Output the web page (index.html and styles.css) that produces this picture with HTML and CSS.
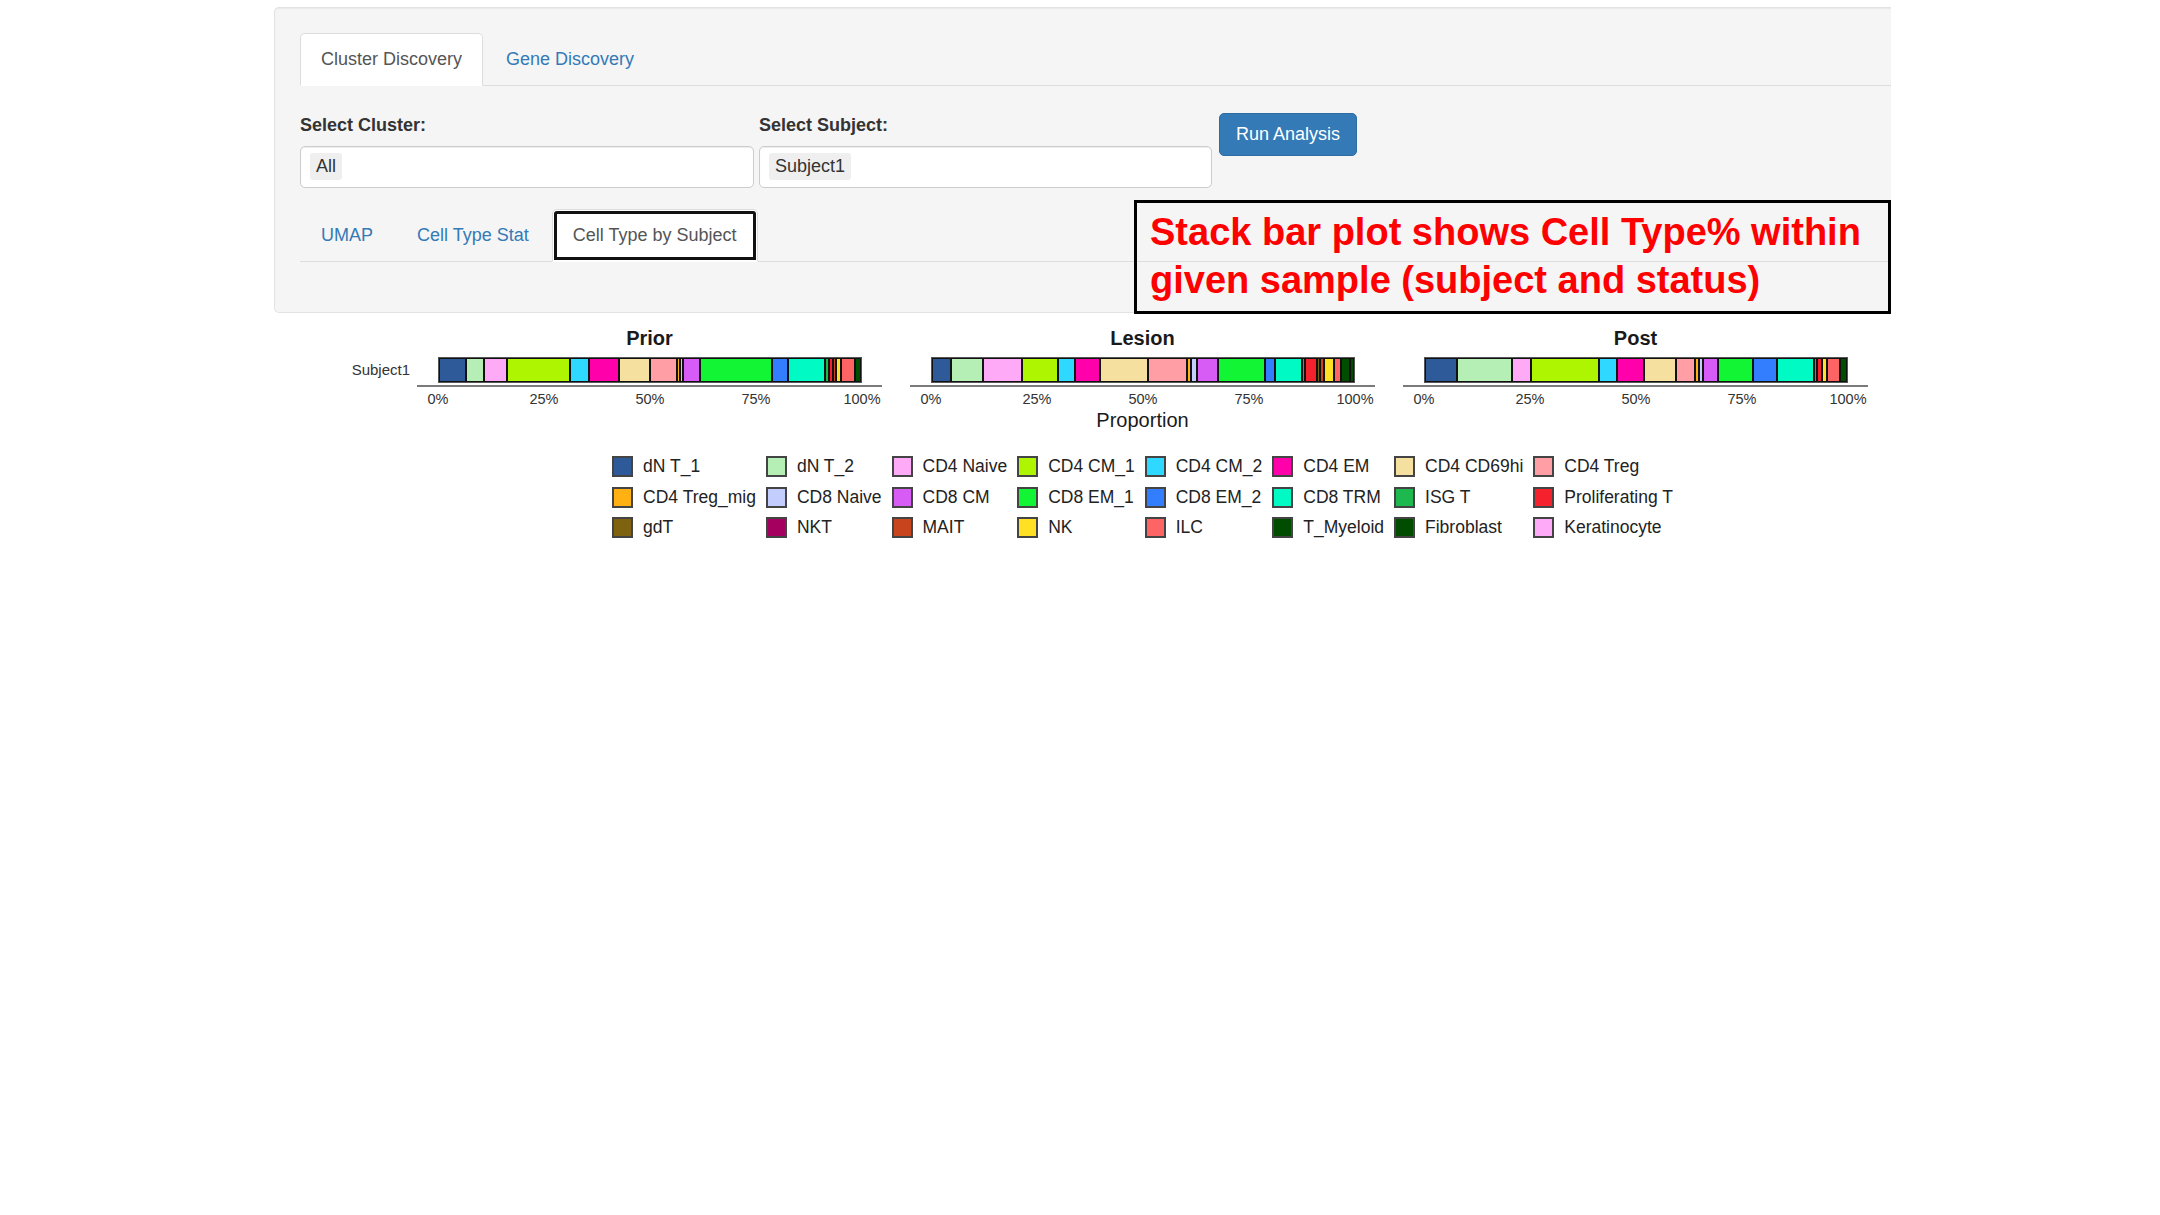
FILE: index.html
```html
<!DOCTYPE html>
<html>
<head>
<meta charset="utf-8">
<title>Cell Type by Subject</title>
<link rel="stylesheet" href="styles.css">
</head>
<body>
<div class="page">
  <div class="well">
    <ul class="nav-tabs">
      <li class="tab active"><a>Cluster Discovery</a></li>
      <li class="tab"><a>Gene Discovery</a></li>
    </ul>
    <div class="form-row">
      <div class="field field-cluster">
        <label class="field-label">Select Cluster:</label>
        <div class="select-box"><span class="chip">All</span></div>
      </div>
      <div class="field field-subject">
        <label class="field-label">Select Subject:</label>
        <div class="select-box"><span class="chip">Subject1</span></div>
      </div>
      <button class="btn-run">Run Analysis</button>
    </div>
    <ul class="nav-tabs nav-sub">
      <li class="tab"><a>UMAP</a></li>
      <li class="tab"><a>Cell Type Stat</a></li>
      <li class="tab active"><a class="focused">Cell Type by Subject</a></li>
    </ul>
    <div class="tab-content"></div>
  </div>

  <div class="annotation">Stack bar plot shows Cell Type% within<br>given sample (subject and status)</div>

  <div class="plot">
    <div class="plot-row">
      <div class="ylab"><span>Subject1</span></div>
      <div class="facets">
        <div class="facet">
          <div class="facet-title">Prior</div>
          <div class="bar">
            <span class="seg c1" style="flex:6.46"></span>
            <span class="seg c2" style="flex:4.1"></span>
            <span class="seg c3" style="flex:5.4"></span>
            <span class="seg c4" style="flex:15.9"></span>
            <span class="seg c5" style="flex:4.45"></span>
            <span class="seg c6" style="flex:7.25"></span>
            <span class="seg c7" style="flex:7.6"></span>
            <span class="seg c8" style="flex:6.3"></span>
            <span class="seg c9" style="flex:0.3"></span>
            <span class="seg c10" style="flex:0.3"></span>
            <span class="seg c11" style="flex:3.9"></span>
            <span class="seg c12" style="flex:18.1"></span>
            <span class="seg c13" style="flex:3.75"></span>
            <span class="seg c14" style="flex:8.9"></span>
            <span class="seg c15" style="flex:0.5"></span>
            <span class="seg c16" style="flex:0.5"></span>
            <span class="seg c19" style="flex:0.4"></span>
            <span class="seg c20" style="flex:0.7"></span>
            <span class="seg c21" style="flex:3.2"></span>
            <span class="seg c22" style="flex:1.0"></span>
          </div>
          <div class="axis-line"></div>
          <div class="ticks">
            <span class="tick t0">0%</span><span class="tick t25">25%</span><span class="tick t50">50%</span><span class="tick t75">75%</span><span class="tick t100">100%</span>
          </div>
        </div>
        <div class="facet">
          <div class="facet-title">Lesion</div>
          <div class="bar">
            <span class="seg c1" style="flex:4.4"></span>
            <span class="seg c2" style="flex:8.0"></span>
            <span class="seg c3" style="flex:9.6"></span>
            <span class="seg c4" style="flex:9.1"></span>
            <span class="seg c5" style="flex:3.8"></span>
            <span class="seg c6" style="flex:6.2"></span>
            <span class="seg c7" style="flex:12.0"></span>
            <span class="seg c8" style="flex:9.7"></span>
            <span class="seg c9" style="flex:0.5"></span>
            <span class="seg c10" style="flex:1.0"></span>
            <span class="seg c11" style="flex:5.0"></span>
            <span class="seg c12" style="flex:12.0"></span>
            <span class="seg c13" style="flex:2.05"></span>
            <span class="seg c14" style="flex:6.5"></span>
            <span class="seg c15" style="flex:0.3"></span>
            <span class="seg c16" style="flex:2.7"></span>
            <span class="seg c17" style="flex:0.3"></span>
            <span class="seg c19" style="flex:0.4"></span>
            <span class="seg c20" style="flex:2.0"></span>
            <span class="seg c21" style="flex:1.4"></span>
            <span class="seg c22" style="flex:2.0"></span>
            <span class="seg c23" style="flex:0.4"></span>
          </div>
          <div class="axis-line"></div>
          <div class="ticks">
            <span class="tick t0">0%</span><span class="tick t25">25%</span><span class="tick t50">50%</span><span class="tick t75">75%</span><span class="tick t100">100%</span>
          </div>
        </div>
        <div class="facet">
          <div class="facet-title">Post</div>
          <div class="bar">
            <span class="seg c1" style="flex:7.7"></span>
            <span class="seg c2" style="flex:13.7"></span>
            <span class="seg c3" style="flex:4.6"></span>
            <span class="seg c4" style="flex:17.1"></span>
            <span class="seg c5" style="flex:4.1"></span>
            <span class="seg c6" style="flex:6.5"></span>
            <span class="seg c7" style="flex:7.7"></span>
            <span class="seg c8" style="flex:4.5"></span>
            <span class="seg c9" style="flex:0.4"></span>
            <span class="seg c10" style="flex:0.5"></span>
            <span class="seg c11" style="flex:3.5"></span>
            <span class="seg c12" style="flex:8.6"></span>
            <span class="seg c13" style="flex:5.6"></span>
            <span class="seg c14" style="flex:9.1"></span>
            <span class="seg c15" style="flex:0.3"></span>
            <span class="seg c16" style="flex:0.6"></span>
            <span class="seg c20" style="flex:0.8"></span>
            <span class="seg c21" style="flex:3.0"></span>
            <span class="seg c22" style="flex:1.2"></span>
          </div>
          <div class="axis-line"></div>
          <div class="ticks">
            <span class="tick t0">0%</span><span class="tick t25">25%</span><span class="tick t50">50%</span><span class="tick t75">75%</span><span class="tick t100">100%</span>
          </div>
        </div>
      </div>
    </div>
    <div class="xlab">Proportion</div>
    <div class="legend-wrap">
      <div class="legend">
        <div class="item"><span class="key c1"></span><span class="lbl">dN T_1</span></div>
        <div class="item"><span class="key c2"></span><span class="lbl">dN T_2</span></div>
        <div class="item"><span class="key c3"></span><span class="lbl">CD4 Naive</span></div>
        <div class="item"><span class="key c4"></span><span class="lbl">CD4 CM_1</span></div>
        <div class="item"><span class="key c5"></span><span class="lbl">CD4 CM_2</span></div>
        <div class="item"><span class="key c6"></span><span class="lbl">CD4 EM</span></div>
        <div class="item"><span class="key c7"></span><span class="lbl">CD4 CD69hi</span></div>
        <div class="item"><span class="key c8"></span><span class="lbl">CD4 Treg</span></div>
        <div class="item"><span class="key c9"></span><span class="lbl">CD4 Treg_mig</span></div>
        <div class="item"><span class="key c10"></span><span class="lbl">CD8 Naive</span></div>
        <div class="item"><span class="key c11"></span><span class="lbl">CD8 CM</span></div>
        <div class="item"><span class="key c12"></span><span class="lbl">CD8 EM_1</span></div>
        <div class="item"><span class="key c13"></span><span class="lbl">CD8 EM_2</span></div>
        <div class="item"><span class="key c14"></span><span class="lbl">CD8 TRM</span></div>
        <div class="item"><span class="key c15"></span><span class="lbl">ISG T</span></div>
        <div class="item"><span class="key c16"></span><span class="lbl">Proliferating T</span></div>
        <div class="item"><span class="key c17"></span><span class="lbl">gdT</span></div>
        <div class="item"><span class="key c18"></span><span class="lbl">NKT</span></div>
        <div class="item"><span class="key c19"></span><span class="lbl">MAIT</span></div>
        <div class="item"><span class="key c20"></span><span class="lbl">NK</span></div>
        <div class="item"><span class="key c21"></span><span class="lbl">ILC</span></div>
        <div class="item"><span class="key c22"></span><span class="lbl">T_Myeloid</span></div>
        <div class="item"><span class="key c23"></span><span class="lbl">Fibroblast</span></div>
        <div class="item"><span class="key c24"></span><span class="lbl">Keratinocyte</span></div>
      </div>
    </div>
  </div>
</div>
</body>
</html>
```

FILE: styles.css
```css
html, body {
  margin: 0;
  padding: 0;
  background: #ffffff;
}
body {
  font-family: "Liberation Sans", Arial, Helvetica, sans-serif;
  color: #333333;
}
.page {
  position: relative;
  margin-left: 274px;
  padding-top: 7px;
  width: 1617px;
}

/* Well panel */
.well {
  box-sizing: border-box;
  width: 1617px;
  background: #f5f5f5;
  border: 1px solid #e3e3e3;
  border-right: 0;
  border-radius: 5px 0 0 5px;
  box-shadow: inset 0 1px 1px rgba(0,0,0,0.05);
  padding: 25px 0 25px 25px;
}

/* Tabs */
.nav-tabs {
  display: flex;
  list-style: none;
  margin: 0;
  padding: 0;
  border-bottom: 1px solid #dddddd;
}
.tab {
  margin-bottom: -1px;
  margin-right: 2px;
}
.tab a {
  display: block;
  padding: 12px 20px;
  font-size: 18px;
  line-height: 27px;
  color: #337ab7;
  border: 1px solid transparent;
  border-radius: 5px 5px 0 0;
}
.tab.active a {
  color: #555555;
  background: #ffffff;
  border-color: #dddddd #dddddd transparent;
}
.tab a.focused {
  outline: 3px solid #111111;
  outline-offset: -5px;
}
.nav-sub {
  margin-top: 21px;
}
.tab-content {
  height: 25px;
}

/* Form row */
.form-row {
  display: flex;
  align-items: flex-start;
  margin-top: 26px;
}
.field-cluster {
  width: 454px;
  margin-right: 5px;
}
.field-subject {
  width: 453px;
  margin-right: 7px;
}
.field-label {
  display: block;
  font-size: 18px;
  line-height: 27px;
  font-weight: bold;
  color: #333333;
  margin-bottom: 7px;
}
.select-box {
  box-sizing: border-box;
  height: 42px;
  background: #ffffff;
  border: 1px solid #cccccc;
  border-radius: 5px;
  box-shadow: inset 0 1px 1px rgba(0,0,0,0.075);
  padding: 6px 9px;
  display: flex;
  align-items: flex-start;
}
.chip {
  display: inline-block;
  background: #efefef;
  color: #333333;
  font-size: 18px;
  line-height: 27px;
  padding: 0 6px;
  border-radius: 3px;
}
.btn-run {
  margin-top: 1px;
  height: 43px;
  box-sizing: border-box;
  padding: 7px 16px;
  font-family: "Liberation Sans", Arial, sans-serif;
  font-size: 18px;
  line-height: 27px;
  color: #ffffff;
  background: #337ab7;
  border: 1px solid #2e6da4;
  border-radius: 5px;
}

/* Annotation overlay */
.annotation {
  position: absolute;
  left: 860px;
  top: 200px;
  box-sizing: border-box;
  width: 757px;
  height: 114px;
  border: 3px solid #000000;
  padding: 5px 10px 0 13px;
  font-family: "Liberation Sans", Arial, sans-serif;
  font-weight: bold;
  font-size: 38px;
  line-height: 48px;
  color: #ff0000;
  white-space: nowrap;
}

/* Plot */
.plot {
  margin-top: 13px;
  color: #1a1a1a;
}
.plot-row {
  display: flex;
  margin-left: 66px;
}
.ylab {
  width: 70px;
  margin-right: 7px;
  padding-top: 31px;
  text-align: right;
  font-size: 15px;
  line-height: 26px;
  color: #333333;
}
.facets {
  display: flex;
  gap: 28px;
}
.facet {
  width: 465px;
}
.facet-title {
  text-align: center;
  font-size: 20px;
  line-height: 24px;
  font-weight: bold;
  margin-bottom: 7px;
  color: #1a1a1a;
}
.bar {
  display: flex;
  height: 26px;
  margin: 0 20px 0 21px;
  border: 1px solid #555555;
  box-sizing: border-box;
}
.seg {
  box-sizing: border-box;
  flex-basis: 0;
  min-width: 0;
  border: 1px solid #111111;
}
.axis-line {
  height: 2px;
  margin-top: 2px;
  background: #7a7a7a;
}
.ticks {
  position: relative;
  height: 17px;
  margin: 4px 20px 0 21px;
}
.tick {
  position: absolute;
  top: 0;
  transform: translateX(-50%);
  font-size: 14.5px;
  line-height: 17px;
  color: #333333;
  white-space: nowrap;
}
.t0 { left: 0; }
.t25 { left: 25%; }
.t50 { left: 50%; }
.t75 { left: 75%; }
.t100 { left: 100%; }

.xlab {
  margin-left: 143px;
  width: 1451px;
  text-align: center;
  font-size: 20px;
  line-height: 24px;
  color: #1a1a1a;
}
.legend-wrap {
  margin-left: 143px;
  width: 1451px;
  margin-top: 24px;
  display: flex;
  justify-content: center;
}
.legend {
  display: grid;
  grid-template-columns: repeat(8, auto);
  column-gap: 10px;
  row-gap: 9.5px;
}
.item {
  display: flex;
  align-items: center;
  gap: 10px;
  height: 21px;
}
.key {
  box-sizing: border-box;
  width: 21px;
  height: 21px;
  border: 2px solid #444444;
  flex: none;
}
.lbl {
  font-size: 17.5px;
  line-height: 21px;
  color: #222222;
  white-space: nowrap;
}

/* Cell type palette */
.c1 { background: #2e5a9a; }
.c2 { background: #b5efb5; }
.c3 { background: #ffaaf6; }
.c4 { background: #adf500; }
.c5 { background: #2ed8ff; }
.c6 { background: #ff00aa; }
.c7 { background: #f5e0a0; }
.c8 { background: #ff9ea5; }
.c9 { background: #ffb114; }
.c10 { background: #c3ceff; }
.c11 { background: #d75cf5; }
.c12 { background: #12f535; }
.c13 { background: #337dff; }
.c14 { background: #00fac3; }
.c15 { background: #1db84e; }
.c16 { background: #f5222d; }
.c17 { background: #7e6210; }
.c18 { background: #a5005f; }
.c19 { background: #c7441c; }
.c20 { background: #ffe022; }
.c21 { background: #ff6464; }
.c22 { background: #004d00; }
.c23 { background: #004d00; }
.c24 { background: #ffaaf8; }
```
